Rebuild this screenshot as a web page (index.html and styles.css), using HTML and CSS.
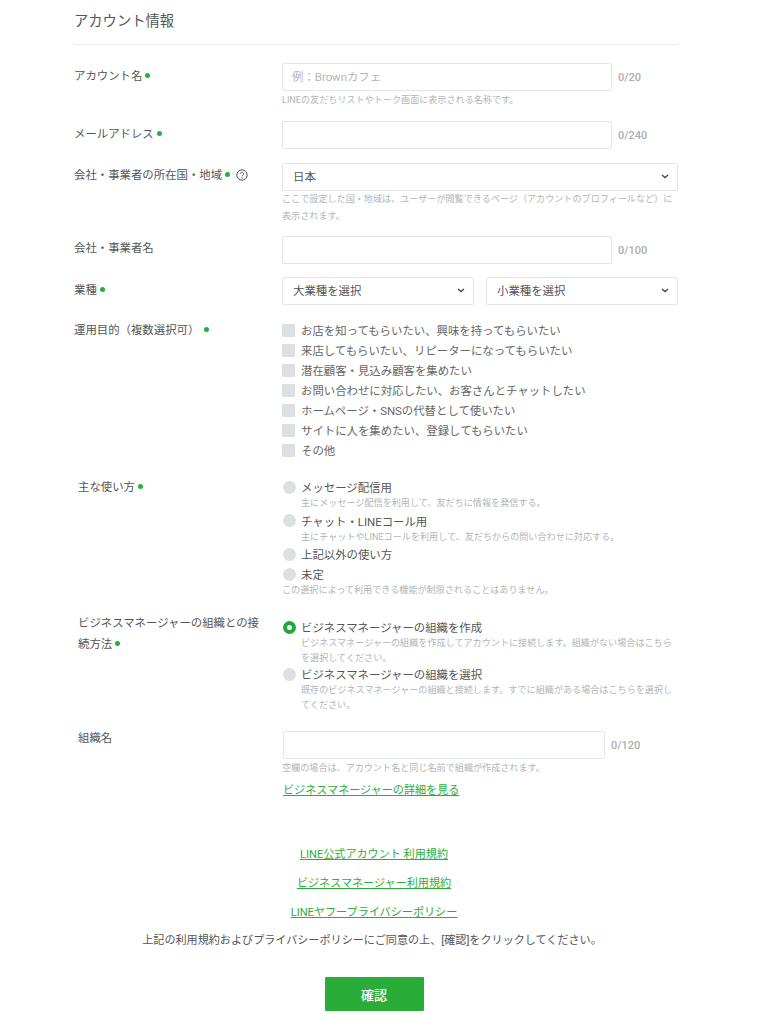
FILE: index.html
```html
<!DOCTYPE html>
<html lang="ja">
<head>
<meta charset="utf-8">
<title>アカウント情報</title>
<link rel="stylesheet" href="styles.css">
</head>
<body>
<main class="page">
  <h1 class="title">アカウント情報</h1>

  <div class="row row-a">
    <div class="label">アカウント名<i class="dot"></i></div>
    <div class="field">
      <div class="line"><div class="input placeholder">例：Brownカフェ</div><span class="count">0/20</span></div>
      <p class="help">LINEの友だちリストやトーク画面に表示される名称です。</p>
    </div>
  </div>

  <div class="row row-b">
    <div class="label">メールアドレス<i class="dot"></i></div>
    <div class="field">
      <div class="line"><div class="input"></div><span class="count">0/240</span></div>
    </div>
  </div>

  <div class="row row-c">
    <div class="label label-high">会社・事業者の所在国・地域<i class="dot"></i>
      <svg class="qmark" viewBox="0 0 12 12" aria-hidden="true"><circle cx="6" cy="6" r="5.2" fill="none" stroke="#555" stroke-width="1"/><path d="M4.4 4.7a1.6 1.6 0 1 1 2.6 1.3c-.6.4-1 .7-1 1.4" fill="none" stroke="#555" stroke-width="1"/><circle cx="6" cy="9" r=".65" fill="#555"/></svg>
    </div>
    <div class="field">
      <div class="select">日本<svg class="chev" viewBox="0 0 8 5" aria-hidden="true"><path d="M1 1l3 2.6L7 1" fill="none" stroke="#444" stroke-width="1.3"/></svg></div>
      <p class="help help-tall">ここで設定した国・地域は、ユーザーが閲覧できるページ（アカウントのプロフィールなど）に表示されます。</p>
    </div>
  </div>

  <div class="row row-d">
    <div class="label label-high">会社・事業者名</div>
    <div class="field">
      <div class="line"><div class="input"></div><span class="count">0/100</span></div>
    </div>
  </div>

  <div class="row row-e">
    <div class="label">業種<i class="dot"></i></div>
    <div class="field selects">
      <div class="select">大業種を選択<svg class="chev" viewBox="0 0 8 5" aria-hidden="true"><path d="M1 1l3 2.6L7 1" fill="none" stroke="#444" stroke-width="1.3"/></svg></div>
      <div class="select">小業種を選択<svg class="chev" viewBox="0 0 8 5" aria-hidden="true"><path d="M1 1l3 2.6L7 1" fill="none" stroke="#444" stroke-width="1.3"/></svg></div>
    </div>
  </div>

  <div class="row row-f">
    <div class="label label-check">運用目的（複数選択可）<i class="dot dot-far"></i></div>
    <div class="field">
      <div class="check"><i class="box"></i>お店を知ってもらいたい、興味を持ってもらいたい</div>
      <div class="check"><i class="box"></i>来店してもらいたい、リピーターになってもらいたい</div>
      <div class="check"><i class="box"></i>潜在顧客・見込み顧客を集めたい</div>
      <div class="check"><i class="box"></i>お問い合わせに対応したい、お客さんとチャットしたい</div>
      <div class="check"><i class="box"></i>ホームページ・SNSの代替として使いたい</div>
      <div class="check"><i class="box"></i>サイトに人を集めたい、登録してもらいたい</div>
      <div class="check"><i class="box"></i>その他</div>
    </div>
  </div>

  <div class="row row-g">
    <div class="label label-in">主な使い方<i class="dot"></i></div>
    <div class="field">
      <div class="radio"><i class="disc"></i>メッセージ配信用</div>
      <p class="sub">主にメッセージ配信を利用して、友だちに情報を発信する。</p>
      <div class="radio"><i class="disc"></i>チャット・LINEコール用</div>
      <p class="sub">主にチャットやLINEコールを利用して、友だちからの問い合わせに対応する。</p>
      <div class="radio"><i class="disc"></i>上記以外の使い方</div>
      <div class="radio radio-gap"><i class="disc"></i>未定</div>
      <p class="help help-flat">この選択によって利用できる機能が制限されることはありません。</p>
    </div>
  </div>

  <div class="row row-h">
    <div class="label label-in label-wrap">ビジネスマネージャーの組織との接続方法<i class="dot"></i></div>
    <div class="field field-pad">
      <div class="radio radio-tight"><i class="disc disc-on"></i>ビジネスマネージャーの組織を作成</div>
      <p class="sub">ビジネスマネージャーの組織を作成してアカウントに接続します。組織がない場合はこちらを選択してください。</p>
      <div class="radio radio-tight"><i class="disc"></i>ビジネスマネージャーの組織を選択</div>
      <p class="sub">既存のビジネスマネージャーの組織と接続します。すでに組織がある場合はこちらを選択してください。</p>
    </div>
  </div>

  <div class="row row-i">
    <div class="label label-in label-org">組織名</div>
    <div class="field">
      <div class="line line-org"><div class="input"></div><span class="count">0/120</span></div>
      <p class="help">空欄の場合は、アカウント名と同じ名前で組織が作成されます。</p>
      <a class="link link-more" href="#">ビジネスマネージャーの詳細を見る</a>
    </div>
  </div>

  <div class="terms">
    <a class="link" href="#">LINE公式アカウント 利用規約</a>
    <a class="link" href="#">ビジネスマネージャー利用規約</a>
    <a class="link" href="#">LINEヤフープライバシーポリシー</a>
    <p class="agree">上記の利用規約およびプライバシーポリシーにご同意の上、[確認]をクリックしてください。</p>
    <button class="submit" type="button">確認</button>
  </div>
</main>
</body>
</html>
```
FILE: styles.css
```css
* { box-sizing: border-box; }
html, body { margin: 0; padding: 0; background: #fff; }
body {
  font-family: Roboto, "Noto Sans CJK JP", sans-serif;
  font-size: 11.4px;
  color: #555;
}
.page { width: 767px; height: 1024px; overflow: hidden; padding: 0 89px 0 74px; }
.title {
  margin: 0;
  height: 45px;
  padding-top: 11px;
  font-size: 14.3px;
  line-height: 20px;
  font-weight: 400;
  color: #555;
  border-bottom: 1px solid #ebebeb;
}
.row { display: flex; }
.row-a { margin-top: 18px; }
.row-b { margin-top: 12px; }
.row-c { margin-top: 14px; }
.row-d { margin-top: 11px; }
.row-e { margin-top: 13px; }
.row-f { margin-top: 15px; }
.row-g { margin-top: 17px; }
.row-h { margin-top: 14px; }
.row-i { margin-top: 19px; }
.label { width: 208px; flex: none; padding-top: 3px; line-height: 20px; }
.label-high { padding-top: 2px; }
.label-check { padding-top: 0; }
.label-in { padding-left: 4px; padding-top: 0; }
.label-wrap { padding-right: 20px; line-height: 21px; }
.label-org { margin-top: -3px; }
.dot {
  display: inline-block;
  width: 5px;
  height: 5px;
  margin-left: 3px;
  border-radius: 50%;
  background: #22b13a;
  vertical-align: 2px;
}
.dot-far { margin-left: 5px; }
.qmark { width: 12px; height: 12px; margin-left: 3px; vertical-align: -2px; }
.field { flex: 1; min-width: 0; }
.field-pad { padding-top: 5px; }
.line { display: flex; align-items: center; }
.input, .select {
  height: 28px;
  border: 1px solid #e3e6e8;
  border-radius: 2px;
  background: #fff;
  line-height: 26px;
  padding: 0 10px;
  color: #555;
}
.input { width: 330px; flex: none; }
.placeholder { color: #b2b5b8; padding-left: 9px; }
.count { margin-left: 6px; font-size: 11px; font-weight: 500; color: #a9adb1; }
.line-org { margin-left: 1px; }
.line-org .input { width: 322px; }
.select { position: relative; }
.chev { position: absolute; right: 8px; top: 10px; width: 8px; height: 5px; }
.selects { display: flex; gap: 12px; }
.selects .select { flex: 1; }
.help { margin: 1px 0 0; font-size: 9.1px; line-height: 17px; color: #b2b5b8; }
.help-tall { margin-top: 0; padding-right: 2px; }
.help-flat { margin-top: -1px; }
.check { display: flex; align-items: center; height: 20px; color: #666; }
.box {
  width: 13px;
  height: 13px;
  margin: 0 6px 0 0;
  background: #dde0e3;
  border-radius: 1px;
  flex: none;
}
.radio { display: flex; align-items: center; height: 18px; color: #555; margin-top: 1px; }
.radio-gap { margin-top: 2px; }
.radio-tight { margin-top: 0; }
.disc {
  width: 13px;
  height: 13px;
  margin: 0 5px 0 1px;
  border-radius: 50%;
  background: #dde0e3;
  flex: none;
}
.disc-on { background: #fff; border: 4px solid #22a838; }
.sub { margin: 0 0 0 19px; font-size: 9.1px; line-height: 14.5px; color: #b2b5b8; }
.link { color: #2aae3a; font-size: 11.1px; text-decoration: underline; }
.link-more { display: block; margin: 5px 0 0 1px; line-height: 17px; }
.terms { display: flex; flex-direction: column; align-items: center; margin-top: 47px; padding-right: 4px; }
.terms .link { line-height: 17px; margin-bottom: 12px; }
.agree { margin: -1px 4px 0 0; font-size: 11.1px; line-height: 17px; color: #555; }
.submit {
  width: 99px;
  height: 34px;
  margin: 28px 0 0;
  border: 0;
  border-radius: 1px;
  background: #29ad38;
  color: #fff;
  font: 500 13px Roboto, "Noto Sans CJK JP", sans-serif;
}
```
